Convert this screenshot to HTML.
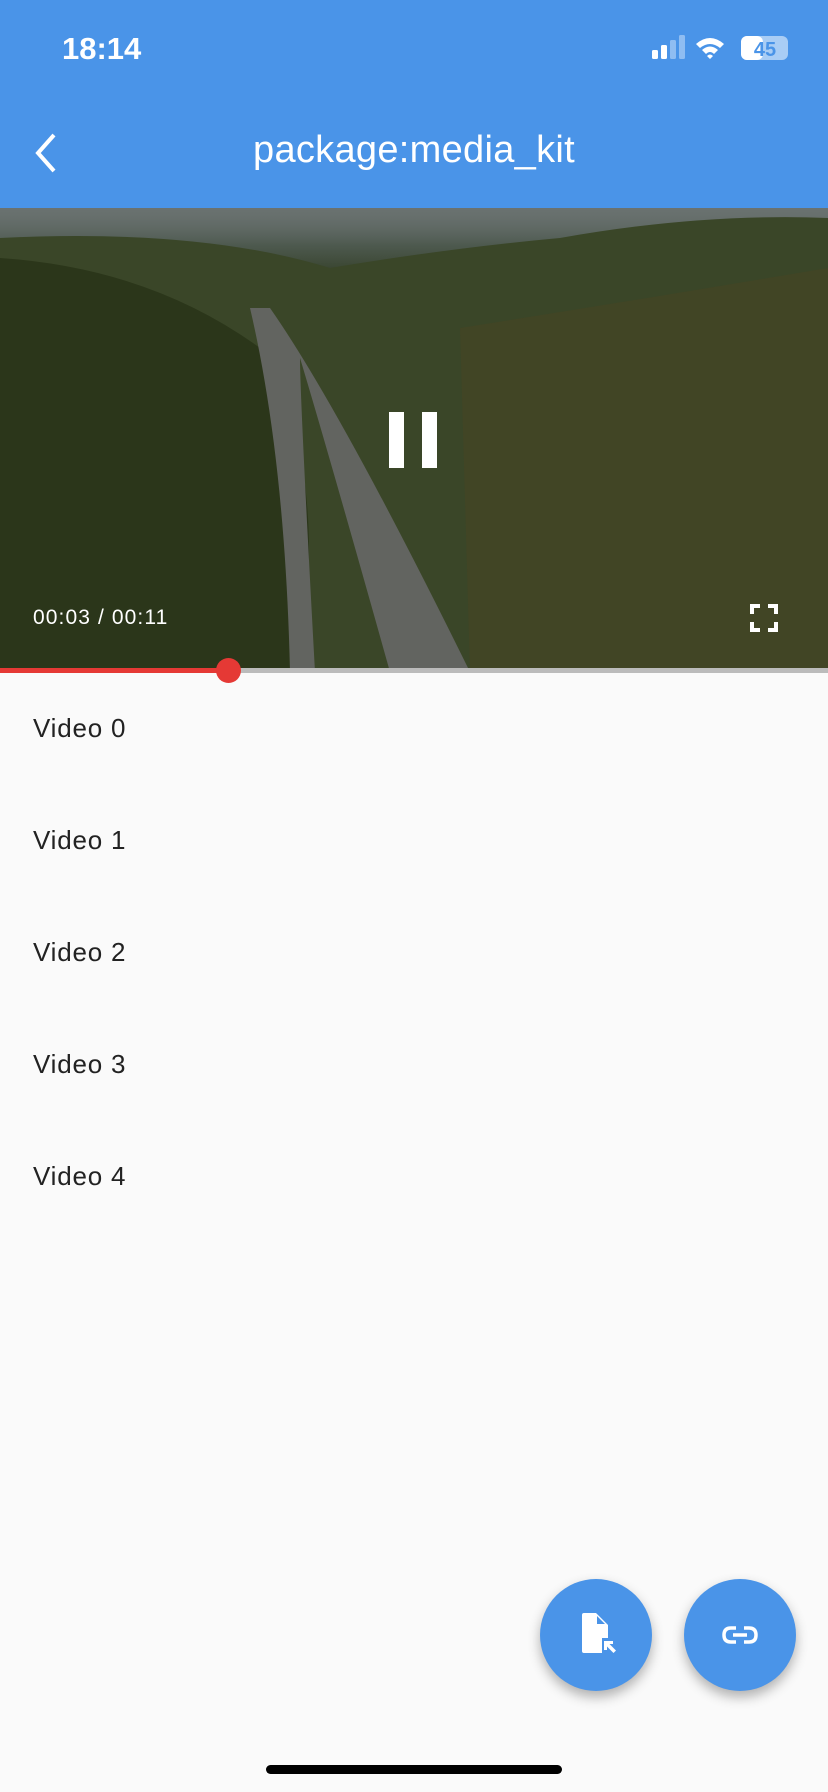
<!DOCTYPE html>
<html><head><style>
body{margin:0;width:828px;height:1792px;background:#fafafa;font-family:"Liberation Sans",sans-serif;position:relative;overflow:hidden}
.bar{position:absolute;left:0;top:0;width:828px;height:208px;background:#4a94e8}
.vid{position:absolute;left:0;top:208px;width:828px;height:464px;overflow:hidden;
background:linear-gradient(180deg,#5a6460 0%,#3c4a3a 8%,#3a4228 20%,#2f3a1e 45%,#2a3418 75%,#263014 100%)}
.item{position:absolute;left:33px;font-size:26px;letter-spacing:.8px;color:#222}
.fab{position:absolute;width:112px;height:112px;border-radius:50%;background:#4a94e8;box-shadow:0 6px 12px rgba(0,0,0,.3)}
</style></head><body>
<div class="bar">
<div style="position:absolute;left:62px;top:31px;color:#fff;font-size:31px;font-weight:bold">18:14</div>
<svg style="position:absolute;left:652px;top:34px" width="140" height="30" viewBox="0 0 140 30">
<rect x="0" y="16" width="6" height="9" rx="1.5" fill="#fff"/><rect x="9" y="11" width="6" height="14" rx="1.5" fill="#fff"/>
<rect x="18" y="6" width="6" height="19" rx="1.5" fill="#8fbdf2"/><rect x="27" y="1" width="6" height="24" rx="1.5" fill="#8fbdf2"/>
<path d="M44 10 Q58 -2 72 10 L68 14 Q58 6 48 14Z M50 16 Q58 9 66 16 L62 20 Q58 16 54 20Z M55 22 L58 25 L61 22 Q58 19 55 22Z" fill="#fff"/>
<rect x="89" y="2" width="47" height="24" rx="6" fill="#a9cdf5"/><rect x="89" y="2" width="22" height="24" rx="6" fill="#fff"/>
<text x="113" y="22" font-size="20" font-weight="bold" fill="#4a94e8" text-anchor="middle" font-family="Liberation Sans">45</text>
</svg>
<svg style="position:absolute;left:30px;top:132px" width="30" height="42"><path d="M24 3 L8 21 L24 39" stroke="#fff" stroke-width="4" fill="none"/></svg>
<div style="position:absolute;left:0;width:828px;top:129px;text-align:center;color:#fff;font-size:38px;letter-spacing:.3px">package:media_kit</div>
</div>
<div class="vid">
<div style="position:absolute;left:0;top:0;width:828px;height:60px;background:linear-gradient(#6a7270,rgba(90,100,90,0))"></div>
<svg style="position:absolute;left:0;top:0" width="828" height="464">
<path d="M0 30 Q200 20 330 60 Q450 40 560 30 Q700 5 828 10 L828 464 L0 464Z" fill="#3a4628"/>
<path d="M0 50 Q150 60 260 140 Q330 250 300 464 L0 464Z" fill="#2b361a"/>
<path d="M460 120 Q650 90 828 60 L828 464 L470 464Z" fill="#454424" opacity=".7"/>
<path d="M250 100 L270 100 Q340 200 470 464 L390 464 Q330 250 300 150 Q300 190 315 464 L290 464 Q285 250 250 100Z" fill="#626460"/>
</svg>
<div style="position:absolute;left:389px;top:204px;width:15px;height:56px;background:#fff"></div>
<div style="position:absolute;left:422px;top:204px;width:15px;height:56px;background:#fff"></div>
<div style="position:absolute;left:33px;top:398px;color:#fff;font-size:21px;letter-spacing:1.1px">00:03 / 00:11</div>
<svg style="position:absolute;left:750px;top:396px" width="28" height="28" viewBox="0 0 28 28" fill="none" stroke="#fff" stroke-width="4"><path d="M2 10V2H10M18 2H26V10M26 18V26H18M10 26H2V18"/></svg>
</div>
<div style="position:absolute;left:0;top:668px;width:828px;height:5px;background:#bbb"></div>
<div style="position:absolute;left:0;top:668px;width:228px;height:5px;background:#e53935"></div>
<div style="position:absolute;left:216px;top:658px;width:25px;height:25px;border-radius:50%;background:#e53935"></div>
<div class="item" style="top:713px">Video 0</div>
<div class="item" style="top:825px">Video 1</div>
<div class="item" style="top:937px">Video 2</div>
<div class="item" style="top:1049px">Video 3</div>
<div class="item" style="top:1161px">Video 4</div>
<div class="fab" style="left:540px;top:1579px"><svg style="position:absolute;left:36px;top:32px" width="44" height="48" viewBox="0 0 44 48"><path d="M8 2H20L32 14V27H26V42H8Q6 42 6 40V4Q6 2 8 2Z" fill="#fff"/><path d="M21 5V13H29Z" fill="#4a94e8"/><path d="M29 30H37V33H33.5L40 39.5L37.5 42L31 35.5V39H28V30Z" fill="#fff"/></svg></div>
<div class="fab" style="left:684px;top:1579px"><svg style="position:absolute;left:36px;top:36px" width="40" height="40" viewBox="0 0 40 40" fill="none" stroke="#fff" stroke-width="3.5"><path d="M16 13H11Q4 13 4 20Q4 27 11 27H16M24 13H29Q36 13 36 20Q36 27 29 27H24M13 20H27"/></svg></div>
<div style="position:absolute;left:266px;top:1765px;width:296px;height:9px;border-radius:5px;background:#000"></div>
</body></html>
